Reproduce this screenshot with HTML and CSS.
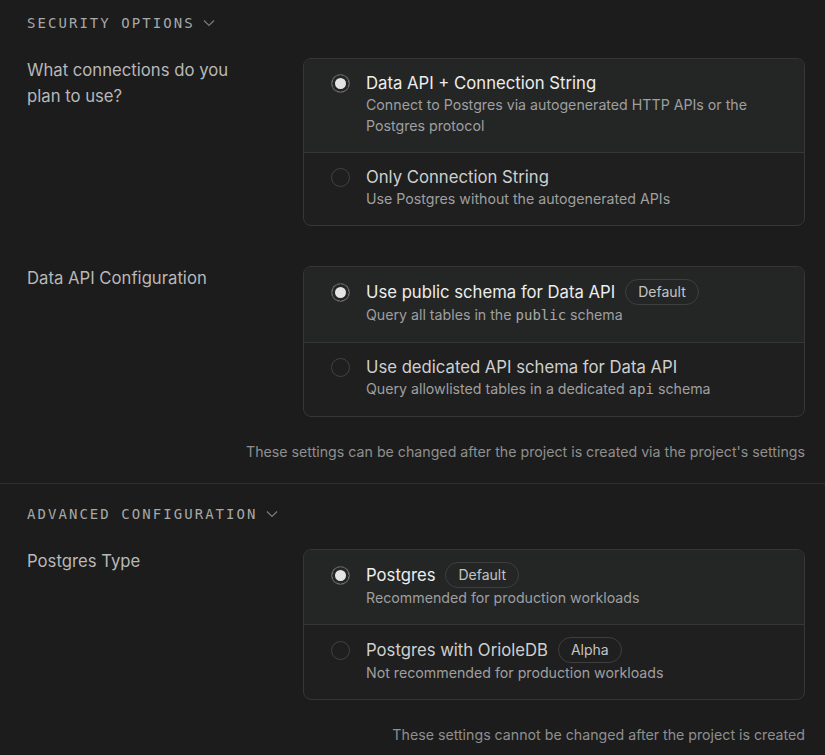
FILE: index.html
```html
<!DOCTYPE html>
<html lang="en">
<head>
<meta charset="utf-8">
<title>Project settings</title>
<link rel="stylesheet" href="styles.css">
</head>
<body>
<div class="page">
  <section class="section">
    <div class="heading"><span class="heading-text">SECURITY OPTIONS</span><svg class="chev" width="12" height="8" viewBox="0 0 12 8"><path d="M1 1.5 L6 6.5 L11 1.5" fill="none" stroke="currentColor" stroke-width="1.2"/></svg></div>
    <div class="field">
      <div class="label">What connections do you plan to use?</div>
      <div class="card">
        <div class="option selected">
          <span class="radio"></span>
          <div class="opt-body">
            <div class="opt-title">Data API + Connection String</div>
            <div class="opt-desc">Connect to Postgres via autogenerated HTTP APIs or the Postgres protocol</div>
          </div>
        </div>
        <div class="option">
          <span class="radio"></span>
          <div class="opt-body">
            <div class="opt-title">Only Connection String</div>
            <div class="opt-desc">Use Postgres without the autogenerated APIs</div>
          </div>
        </div>
      </div>
    </div>
    <div class="field">
      <div class="label">Data API Configuration</div>
      <div class="card">
        <div class="option selected">
          <span class="radio radio-badge"></span>
          <div class="opt-body">
            <div class="opt-title">Use public schema for Data API <span class="badge">Default</span></div>
            <div class="opt-desc">Query all tables in the <code>public</code> schema</div>
          </div>
        </div>
        <div class="option">
          <span class="radio"></span>
          <div class="opt-body">
            <div class="opt-title">Use dedicated API schema for Data API</div>
            <div class="opt-desc">Query allowlisted tables in a dedicated <code>api</code> schema</div>
          </div>
        </div>
      </div>
    </div>
    <p class="note">These settings can be changed after the project is created via the project's settings</p>
  </section>
  <section class="section bordered">
    <div class="heading"><span class="heading-text">ADVANCED CONFIGURATION</span><svg class="chev" width="12" height="8" viewBox="0 0 12 8"><path d="M1 1.5 L6 6.5 L11 1.5" fill="none" stroke="currentColor" stroke-width="1.2"/></svg></div>
    <div class="field">
      <div class="label">Postgres Type</div>
      <div class="card">
        <div class="option selected">
          <span class="radio radio-badge"></span>
          <div class="opt-body">
            <div class="opt-title">Postgres <span class="badge">Default</span></div>
            <div class="opt-desc">Recommended for production workloads</div>
          </div>
        </div>
        <div class="option">
          <span class="radio radio-badge"></span>
          <div class="opt-body">
            <div class="opt-title">Postgres with OrioleDB <span class="badge">Alpha</span></div>
            <div class="opt-desc">Not recommended for production workloads</div>
          </div>
        </div>
      </div>
    </div>
    <p class="note">These settings cannot be changed after the project is created</p>
  </section>
</div>
</body>
</html>
```
FILE: styles.css
```css
html, body {
  margin: 0;
  background: #1c1c1c;
}
body {
  font-family: Inter, "Noto Sans", sans-serif;
  color: #ededed;
  -webkit-font-smoothing: antialiased;
}
.page {
  width: 825px;
}
.section {
  padding: 13px 20px 0 27px;
}
.section.bordered {
  border-top: 1px solid #2e2e2e;
  padding-top: 20px;
}
.heading {
  font-family: "DejaVu Sans Mono", monospace;
  font-size: 14px;
  line-height: 20px;
  color: #a8a8a8;
  display: flex;
  align-items: center;
  margin-bottom: 25px;
}
.heading-text {
  letter-spacing: 2.05px;
}
.chev {
  color: #7a7a7a;
  margin-left: 8px;
}
.field {
  display: grid;
  grid-template-columns: 276px 502px;
  margin-bottom: 40px;
}
.section .field:last-of-type {
  margin-bottom: 25px;
}
.label {
  font-size: 16.7px;
  line-height: 26px;
  color: #b8b8b8;
  padding-right: 40px;
  margin-top: -1px;
}
.card {
  border: 1px solid #363636;
  border-radius: 8px;
  overflow: hidden;
  background: #1f1f1f;
}
.option {
  display: flex;
  gap: 16px;
  padding: 13px 20px 16px 27px;
}
.option + .option {
  border-top: 1px solid #363636;
}
.option.selected {
  background: #242626;
}
.radio {
  flex: none;
  width: 19px;
  height: 19px;
  border: 1px solid #424242;
  border-radius: 50%;
  margin-top: 2px;
  box-sizing: border-box;
}
.radio.radio-badge {
  margin-top: 3px;
}
.selected .radio {
  border-color: #4e4e4e;
  background: #e4e4e4;
  box-shadow: inset 0 0 0 3px #262626;
}
.opt-body {
  flex: 1;
}
.opt-title {
  font-size: 16.7px;
  line-height: 22px;
  color: #cfcfcf;
  display: flex;
  align-items: center;
  gap: 10px;
}
.selected .opt-title {
  color: #ededed;
}
.badge {
  display: inline-flex;
  align-items: center;
  height: 26px;
  margin: -1px 0;
  box-sizing: border-box;
  padding: 0 12px;
  border: 1px solid #3e3e3e;
  border-radius: 13px;
  font-size: 14px;
  color: #c4c4c4;
}
.opt-desc {
  font-size: 14.2px;
  line-height: 21px;
  color: #9f9f9f;
}
code {
  font-family: "DejaVu Sans Mono", monospace;
  font-size: 14px;
  color: #a8a8a8;
}
.note {
  margin: 0;
  text-align: right;
  font-size: 14.2px;
  line-height: 20px;
  color: #8f8f8f;
  padding-bottom: 21px;
}
```
